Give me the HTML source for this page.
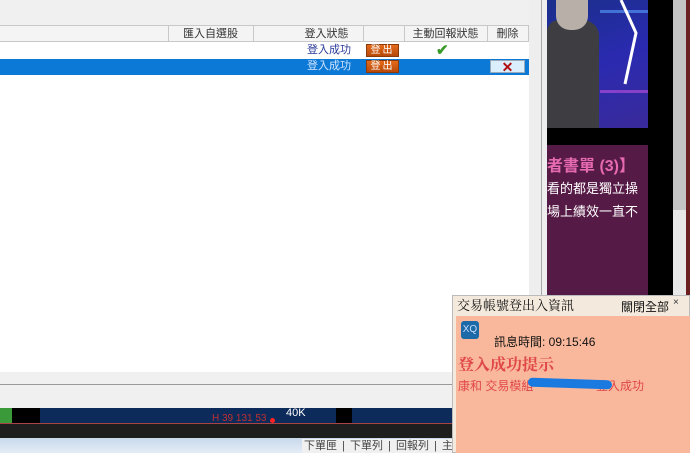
<!DOCTYPE html>
<html><head><meta charset="utf-8"><style>
*{margin:0;padding:0;box-sizing:border-box}
body{width:690px;height:453px;overflow:hidden;position:relative;background:#f0f0f0;font-family:"Liberation Sans","Noto Sans CJK TC",sans-serif;font-size:11px}
.a{position:absolute}
.hd{top:25px;left:0;width:529px;height:17px;background:#f4f4f4;border-top:1px solid #c8c8c8;border-bottom:1px solid #c8c8c8}
.vl{position:absolute;top:0;width:1px;height:16px;background:#c8c8c8}
.t{position:absolute;color:#333;font-size:11px;line-height:16px;text-align:center}
.btn{position:absolute;width:33px;height:13px;background:linear-gradient(#e46a1c,#b84a08);border:1px solid #8a3a08;color:#fff;font-size:10px;line-height:11px;text-align:center;letter-spacing:2px}
</style></head><body>
<div class="a" style="left:0;top:42px;width:529px;height:330px;background:#fff"></div>
<div class="a hd">
 <div class="vl" style="left:168px"></div><div class="vl" style="left:253px"></div><div class="vl" style="left:363px"></div><div class="vl" style="left:404px"></div><div class="vl" style="left:487px"></div><div class="vl" style="left:528px"></div>
 <div class="t" style="left:168px;width:85px">匯入自選股</div>
 <div class="t" style="left:290px;width:73px">登入狀態</div>
 <div class="t" style="left:404px;width:83px">主動回報狀態</div>
 <div class="t" style="left:487px;width:41px">刪除</div>
</div>
<div class="t" style="left:290px;top:42px;width:78px;color:#2a3a9a">登入成功</div>
<div class="btn" style="left:366px;top:44px">登出</div>
<div class="a" style="left:436px;top:41px;color:#3a9a2a;font-size:15px;font-weight:bold">✔</div>
<div class="a" style="left:0;top:59px;width:529px;height:16px;background:#0c79d6"></div>
<div class="t" style="left:290px;top:58px;width:78px;color:#cfe4ff">登入成功</div>
<div class="btn" style="left:366px;top:60px">登出</div>
<div class="a" style="left:490px;top:60px;width:35px;height:13px;background:#dbeefc;border:1px solid #9ab;color:#b01010;font-size:14px;line-height:12px;text-align:center;font-weight:bold">✕</div>
<div class="a" style="left:0;top:384px;width:540px;height:1px;background:#999"></div>
<div class="a" style="left:0;top:385px;width:540px;height:23px;background:#f0f0f0"></div>
<div class="a" style="left:0;top:408px;width:460px;height:15px;background:#0c2a5a"></div>
<div class="a" style="left:0;top:408px;width:12px;height:15px;background:#3a9a3a"></div>
<div class="a" style="left:12px;top:408px;width:28px;height:15px;background:#000"></div>
<div class="a" style="left:336px;top:408px;width:16px;height:15px;background:#000"></div>
<div class="a" style="left:286px;top:407px;color:#fff;font-size:11px">40K</div>
<div class="a" style="left:212px;top:413px;color:#c03030;font-size:10px">H 39 131 53</div>
<div class="a" style="left:270px;top:418px;width:5px;height:5px;border-radius:3px;background:#f22"></div>
<div class="a" style="left:0;top:423px;width:460px;height:1px;background:#a44"></div>
<div class="a" style="left:0;top:424px;width:460px;height:14px;background:#1e1e1e"></div>
<div class="a" style="left:0;top:438px;width:460px;height:15px;background:linear-gradient(#c8d8ec,#e4ecf6)"></div>
<div class="a" style="left:302px;top:439px;color:#444;font-size:11px;background:#f0f0f0;padding:0 2px;line-height:14px;word-spacing:2px">下單匣 | 下單列 | 回報列 | 主動回報</div>
<!-- right panel -->
<div class="a" style="left:529px;top:0;width:18px;height:453px;background:#eeeeee"></div>
<div class="a" style="left:541px;top:0;width:1px;height:300px;background:#aaa"></div>
<div class="a" style="left:547px;top:0;width:101px;height:128px;background:linear-gradient(160deg,#1a2f8a,#2a2ab0 50%,#3a2a9a)"></div>
<div class="a" style="left:600px;top:10px;width:48px;height:3px;background:#5aa0ff;opacity:.6"></div>
<div class="a" style="left:600px;top:90px;width:48px;height:3px;background:#c050e0;opacity:.6"></div>
<div class="a" style="left:547px;top:20px;width:52px;height:108px;background:#3e3e42;border-radius:12px 16px 0 0"></div>
<div class="a" style="left:556px;top:0;width:32px;height:30px;background:#b8b0a8;border-radius:0 0 14px 14px"></div>
<svg class="a" style="left:612px;top:0" width="30" height="90"><path d="M9 0 L24 33 L13 84" stroke="#fff" stroke-width="3" fill="none"/></svg>
<div class="a" style="left:547px;top:128px;width:101px;height:17px;background:#000"></div>
<div class="a" style="left:648px;top:0;width:25px;height:300px;background:#000"></div>
<div class="a" style="left:673px;top:0;width:13px;height:210px;background:#c4c4c4"></div>
<div class="a" style="left:673px;top:210px;width:13px;height:90px;background:#e8e8e8"></div>
<div class="a" style="left:686px;top:0;width:4px;height:300px;background:#6a2020"></div>
<div class="a" style="left:547px;top:145px;width:101px;height:152px;background:#561a46;overflow:hidden;white-space:nowrap">
 <div style="position:absolute;left:0;top:7px;color:#e66ab0;font-size:16px;font-weight:bold">者書單 (3)】</div>
 <div style="position:absolute;left:0;top:33px;color:#fff;font-size:13px">看的都是獨立操</div>
 <div style="position:absolute;left:0;top:56px;color:#fff;font-size:13px">場上績效一直不</div>
</div>
<!-- popup -->
<div class="a" style="left:452px;top:295px;width:238px;height:158px;background:#f3e9dc;border:1px solid #bbb"></div>
<div class="a" style="left:457px;top:295px;font-family:'Liberation Serif','Noto Serif CJK SC',serif;font-size:13px;color:#111">交易帳號登出入資訊</div>
<div class="a" style="left:621px;top:298px;font-size:12px;color:#111">關閉全部</div>
<div class="a" style="left:673px;top:297px;font-size:10px;color:#333">×</div>
<div class="a" style="left:456px;top:316px;width:234px;height:137px;background:#f9b89c"></div>
<div class="a" style="left:461px;top:321px;width:18px;height:18px;background:#1c6aa8;border-radius:3px;color:#cdf;font-size:10px;line-height:18px;text-align:center">XQ</div>
<div class="a" style="left:494px;top:333px;font-size:12px;color:#111">訊息時間: 09:15:46</div>
<div class="a" style="left:458px;top:352px;font-family:'Liberation Serif','Noto Serif CJK SC',serif;font-size:16px;font-weight:bold;color:#e04848">登入成功提示</div>
<div class="a" style="left:458px;top:377px;font-size:12px;color:#e04848">康和 交易模組</div>
<div class="a" style="left:596px;top:377px;font-size:12px;color:#e04848">登入成功</div>
<div class="a" style="left:528px;top:379px;width:84px;height:9px;background:#1a7ae0;border-radius:5px;transform:rotate(2deg)"></div>
</body></html>
